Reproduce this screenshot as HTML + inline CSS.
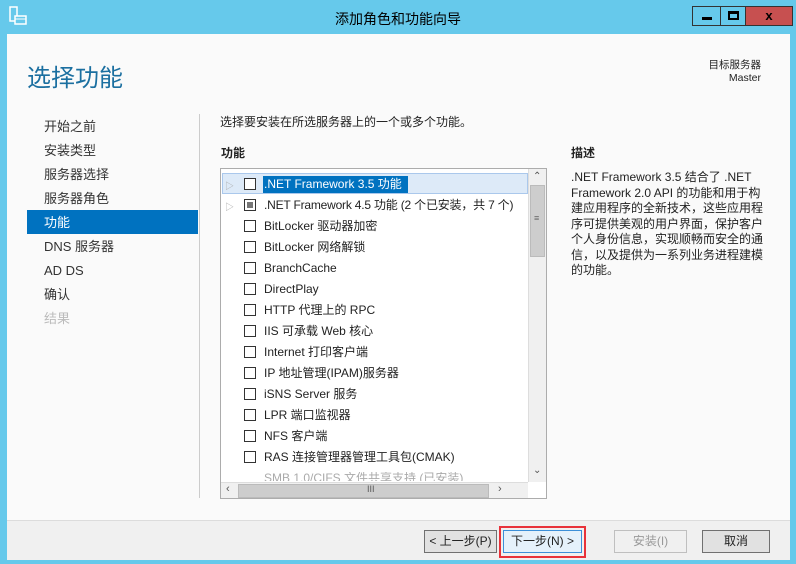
<!DOCTYPE html>
<html><head><meta charset="utf-8"><style>
*{margin:0;padding:0;box-sizing:border-box}
body{width:796px;height:564px;overflow:hidden;background:#66c9eb;font-family:"Liberation Sans","Noto Sans CJK SC",sans-serif;font-size:12px;color:#222;position:relative}
.abs{position:absolute}
.content{left:7px;top:34px;width:783px;height:486px;background:#fafafa}
.footer{left:7px;top:520px;width:783px;height:40px;background:#f0f0f0;border-top:1px solid #dcdcdc}
.title{left:0;top:9px;width:796px;text-align:center;font-size:14px;color:#000}
.nav{left:44px;font-size:13px;color:#333;height:18px;line-height:18px}
.row{left:244px;height:20px;line-height:20px;font-size:12px;white-space:nowrap}
.cb{position:absolute;left:0;top:4px;width:12px;height:12px;border:1px solid #333;background:#fff}
.tx{position:absolute;left:20px;top:0}
.btn{top:530px;height:23px;border:1px solid #707070;background:#e1e1e1;font-size:12px;text-align:center;line-height:21px}
</style></head><body>
<div class="abs" style="left:9px;top:6px;width:16px;height:20px">
<svg width="18" height="20"><rect x="1" y="1" width="7" height="14" fill="none" stroke="#fff" stroke-width="1.5"/><rect x="6" y="10" width="11" height="8" fill="#66c9eb" stroke="#fff" stroke-width="1.5"/><line x1="6" y1="13" x2="17" y2="13" stroke="#fff"/></svg></div>
<div class="abs title">添加角色和功能向导</div>
<div class="abs" style="left:692px;top:6px;width:28px;height:20px;border:1px solid #333;border-right:none"><div class="abs" style="left:9px;top:10px;width:10px;height:3px;background:#000"></div></div>
<div class="abs" style="left:720px;top:6px;width:26px;height:20px;border:1px solid #333"><div class="abs" style="left:7px;top:4px;width:11px;height:9px;border:2px solid #000;border-top-width:3px"></div></div>
<div class="abs" style="left:746px;top:6px;width:47px;height:20px;background:#c75050;border:1px solid #333;border-left:none;text-align:center;font-weight:bold;font-size:13px;line-height:18px;color:#000">x</div>
<div class="abs content"></div>
<div class="abs footer"></div>
<div class="abs" style="left:27px;top:58px;font-size:24px;color:#1b6fa0">选择功能</div>
<div class="abs" style="left:660px;top:59px;width:101px;text-align:right;font-size:10.5px;line-height:13px;color:#222">目标服务器<br>Master</div>
<div class="abs" style="left:199px;top:114px;width:1px;height:384px;background:#ccc"></div>
<div class="abs nav" style="top:118px">开始之前</div>
<div class="abs nav" style="top:142px">安装类型</div>
<div class="abs nav" style="top:166px">服务器选择</div>
<div class="abs nav" style="top:190px">服务器角色</div>
<div class="abs" style="left:27px;top:210px;width:171px;height:24px;background:#0072c0"></div>
<div class="abs nav" style="top:214px;color:#fff">功能</div>
<div class="abs nav" style="top:238px">DNS 服务器</div>
<div class="abs nav" style="top:262px">AD DS</div>
<div class="abs nav" style="top:286px">确认</div>
<div class="abs nav" style="top:310px;color:#bbb">结果</div>
<div class="abs" style="left:220px;top:113px;font-size:12px">选择要安装在所选服务器上的一个或多个功能。</div>
<div class="abs" style="left:221px;top:144px;font-size:12px;font-weight:bold">功能</div>
<div class="abs" style="left:571px;top:144px;font-size:12px;font-weight:bold">描述</div>
<div class="abs" style="left:571px;top:170px;width:200px;font-size:12px;line-height:15.5px">.NET Framework 3.5 结合了 .NET Framework 2.0 API 的功能和用于构建应用程序的全新技术，这些应用程序可提供美观的用户界面，保护客户个人身份信息，实现顺畅而安全的通信，以及提供为一系列业务进程建模的功能。</div>
<div class="abs" style="left:220px;top:168px;width:327px;height:331px;border:1px solid #acacac;background:#fff;overflow:hidden">
<div class="abs" style="left:1px;top:4px;width:306px;height:21px;background:#ddeaf8;border:1px solid #aac8ec"></div>
<div class="abs" style="left:42px;top:7px;width:145px;height:17px;background:#0072c0"></div>
<div class="abs" style="left:307px;top:0;width:18px;height:313px;background:#f0f0f0;border-left:1px solid #ddd"><div class="abs" style="left:1px;top:16px;width:15px;height:72px;background:#cdcdcd;border:1px solid #bbb"></div><div class="abs" style="left:4px;top:2px;color:#555;font-size:10px">⌃</div><div class="abs" style="left:4px;top:296px;color:#555;font-size:10px">⌄</div><div class="abs" style="left:5px;top:44px;color:#666;font-size:9px">≡</div></div>
<div class="abs" style="left:0;top:313px;width:307px;height:17px;background:#f0f0f0;border-top:1px solid #ddd"><div class="abs" style="left:17px;top:1px;width:251px;height:14px;background:#cdcdcd;border:1px solid #bbb"></div><div class="abs" style="left:5px;top:0;color:#555;font-size:11px">‹</div><div class="abs" style="left:277px;top:0;color:#555;font-size:11px">›</div><div class="abs" style="left:146px;top:1px;color:#555;font-size:9px">III</div></div>
</div>
<div class="abs" style="left:225px;top:179px;color:#aaa;font-size:9px">▷</div>
<div class="abs" style="left:225px;top:200px;color:#aaa;font-size:9px">▷</div>
<div class="abs row" style="top:174px"><div class="cb"></div><div class="tx" style="color:#fff">.NET Framework 3.5 功能</div></div>
<div class="abs row" style="top:195px"><div class="cb"><div style="margin:2px;width:6px;height:6px;background:#777"></div></div><div class="tx" style="letter-spacing:-0.2px">.NET Framework 4.5 功能 (2 个已安装，共 7 个)</div></div>
<div class="abs row" style="top:216px"><div class="cb"></div><div class="tx">BitLocker 驱动器加密</div></div>
<div class="abs row" style="top:237px"><div class="cb"></div><div class="tx">BitLocker 网络解锁</div></div>
<div class="abs row" style="top:258px"><div class="cb"></div><div class="tx">BranchCache</div></div>
<div class="abs row" style="top:279px"><div class="cb"></div><div class="tx">DirectPlay</div></div>
<div class="abs row" style="top:300px"><div class="cb"></div><div class="tx">HTTP 代理上的 RPC</div></div>
<div class="abs row" style="top:321px"><div class="cb"></div><div class="tx">IIS 可承载 Web 核心</div></div>
<div class="abs row" style="top:342px"><div class="cb"></div><div class="tx">Internet 打印客户端</div></div>
<div class="abs row" style="top:363px"><div class="cb"></div><div class="tx">IP 地址管理(IPAM)服务器</div></div>
<div class="abs row" style="top:384px"><div class="cb"></div><div class="tx">iSNS Server 服务</div></div>
<div class="abs row" style="top:405px"><div class="cb"></div><div class="tx">LPR 端口监视器</div></div>
<div class="abs row" style="top:426px"><div class="cb"></div><div class="tx">NFS 客户端</div></div>
<div class="abs row" style="top:447px"><div class="cb"></div><div class="tx">RAS 连接管理器管理工具包(CMAK)</div></div>
<div class="abs" style="left:244px;top:472px;width:280px;height:9px;overflow:hidden"><div style="margin-top:-3px;color:#aaa;font-size:12px;padding-left:20px">SMB 1.0/CIFS 文件共享支持 (已安装)</div></div>
<div class="abs btn" style="left:424px;width:73px">&lt; 上一步(P)</div>
<div class="abs" style="left:499px;top:526px;width:87px;height:32px;border:2px solid #e8323a"></div>
<div class="abs btn" style="left:503px;width:79px;border-color:#3c8fd8;background:#e5f1fb">下一步(N) &gt;</div>
<div class="abs btn" style="left:614px;width:73px;border-color:#bfbfbf;background:#f0f0f0;color:#999">安装(I)</div>
<div class="abs btn" style="left:702px;width:68px">取消</div>
</body></html>
